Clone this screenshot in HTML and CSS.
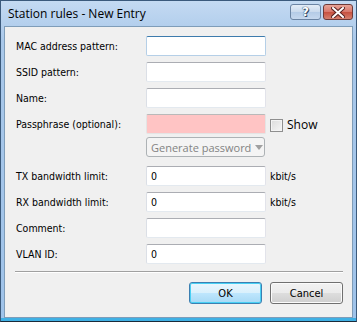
FILE: index.html
```
<!DOCTYPE html>
<html lang="en">
<head>
    <meta charset="UTF-8">
    <title>Station rules - New Entry</title>
    <link rel="stylesheet" href="styles.css">
</head>
<body>
    <div class="window">
        <!-- Title bar -->
        <div class="titlebar">
            <span class="title">Station rules - New Entry</span>
            <div class="caption-buttons">
                <div class="cap-btn help">?</div>
                <div class="cap-btn close">
                    <svg width="14" height="11" viewBox="0 0 14 11">
                        <path d="M2 1 L12 10 M12 1 L2 10" stroke="#5a2220" stroke-width="4" stroke-linecap="square"/>
                        <path d="M2 1 L12 10 M12 1 L2 10" stroke="#ffffff" stroke-width="2" stroke-linecap="square"/>
                    </svg>
                </div>
            </div>
        </div>

        <!-- Client area -->
        <div class="client">
            <div class="row">
                <label class="lbl">MAC address pattern:</label>
                <div class="field focused"></div>
            </div>
            <div class="row">
                <label class="lbl">SSID pattern:</label>
                <div class="field"></div>
            </div>
            <div class="row">
                <label class="lbl">Name:</label>
                <div class="field"></div>
            </div>
            <div class="row">
                <label class="lbl">Passphrase (optional):</label>
                <div class="field invalid"></div>
                <span class="check"></span>
                <span class="unit">Show</span>
            </div>
            <div class="row gen-row">
                <span class="lbl"></span>
                <div class="gen-btn">
                    <span class="gen-text">Generate password</span>
                    <span class="gen-sep"></span>
                    <span class="gen-arrow"></span>
                </div>
            </div>
            <div class="row tx-row">
                <label class="lbl">TX bandwidth limit:</label>
                <div class="field">0</div>
                <span class="unit">kbit/s</span>
            </div>
            <div class="row">
                <label class="lbl">RX bandwidth limit:</label>
                <div class="field">0</div>
                <span class="unit">kbit/s</span>
            </div>
            <div class="row">
                <label class="lbl">Comment:</label>
                <div class="field"></div>
            </div>
            <div class="row">
                <label class="lbl">VLAN ID:</label>
                <div class="field">0</div>
            </div>

            <div class="separator"></div>

            <div class="buttons">
                <div class="btn default">OK</div>
                <div class="btn">Cancel</div>
            </div>
        </div>
    </div>
</body>
</html>
```
FILE: styles.css
```
/* General styling */
body {
    margin: 0;
    background-color: #ffffff;
}

.window {
    width: 357px;
    height: 322px;
    box-sizing: border-box;
    display: flex;
    flex-direction: column;
    background: linear-gradient(#c4daf2, #a9c8ea 40px, #9fc3ea);
    border: 1px solid #3b5a7c;
    border-bottom: 1px solid #1b2b3a;
    padding: 0 3px 3px 3px;
    box-shadow: inset 0 -3px 0 #3fb0e4;
}

/* Title bar */
.titlebar {
    height: 25px;
    display: flex;
    align-items: flex-start;
    justify-content: space-between;
}

.title {
    font-family: "Open Sans", "Noto Sans", sans-serif;
    font-size: 12px;
    color: #000000;
    margin: 4px 0 0 4px;
}

.caption-buttons {
    display: flex;
    gap: 2px;
    margin-top: 3px;
}

.cap-btn {
    height: 16px;
    border-radius: 3px;
    display: flex;
    align-items: center;
    justify-content: center;
    box-sizing: border-box;
}

.cap-btn.help {
    width: 31px;
    border: 1px solid #6b84a3;
    background: linear-gradient(#e4edf7, #c9d9ec 50%, #b4cbe6 51%, #c6d8ee);
    font-family: "DejaVu Sans", sans-serif;
    font-weight: bold;
    font-size: 12px;
    color: #ffffff;
    text-shadow: 0 0 1px #334a66, 0 0 1px #334a66, 1px 1px 0 #334a66;
}

.cap-btn.close {
    width: 30px;
    border: 1px solid #6d3a38;
    background: linear-gradient(#e8a497, #d8766a 50%, #c7503f 51%, #d5806f);
}

/* Client area */
.client {
    flex: 1;
    background-color: #f0f0f0;
    border: 1px solid #7f9db9;
    padding: 9px 9px 0 10px;
    font-family: "DejaVu Sans Condensed", "DejaVu Sans", sans-serif;
    font-size: 10.5px;
    color: #000000;
}

.row {
    display: flex;
    align-items: center;
    height: 20px;
    margin-bottom: 6px;
    white-space: nowrap;
}

.lbl {
    width: 131px;
    padding-left: 1px;
    box-sizing: border-box;
}

.field {
    width: 120px;
    height: 20px;
    box-sizing: border-box;
    background-color: #ffffff;
    border: 1px solid #e2e3ea;
    border-top-color: #abadb3;
    border-left-color: #dbdfe6;
    border-bottom-color: #e3e9ef;
    border-radius: 2px;
    padding: 3px 0 0 4px;
}

.field.focused {
    border-color: #b5cfe7;
    border-top-color: #3d7bad;
}

.field.invalid {
    background-color: #ffc4c4;
    border-color: #e4e4e4;
    border-top-color: #b9b9b9;
}

.check {
    width: 13px;
    height: 13px;
    box-sizing: border-box;
    border: 1px solid #8f8f8f;
    background: linear-gradient(135deg, #dcdcdc, #f6f6f6);
    box-shadow: inset 0 0 0 1px #f4f4f4;
    margin: 2px 4px 0 4px;
}

.unit {
    margin-left: 4px;
}

.check + .unit {
    margin-left: 0;
    font-family: "Open Sans", "Noto Sans", sans-serif;
    font-size: 12px;
}

/* Generate password split button (disabled) */
.gen-row {
    margin-top: -3px;
    margin-bottom: 9px;
}

.gen-btn {
    width: 119px;
    height: 20px;
    box-sizing: border-box;
    border: 1px solid #adb2b5;
    border-radius: 3px;
    background-color: #f4f4f4;
    display: flex;
    align-items: center;
    color: #838383;
    font-family: "Open Sans", "Noto Sans", sans-serif;
    font-size: 11px;
}

.gen-text {
    flex: 1;
    padding-left: 4px;
}

.gen-sep {
    width: 1px;
    height: 14px;
    background-color: #adb2b5;
}

.gen-arrow {
    width: 0;
    height: 0;
    border-left: 4px solid transparent;
    border-right: 4px solid transparent;
    border-top: 5px solid #a0a0a0;
    margin: 0 4px;
}

.separator {
    margin-top: 7px;
    height: 1px;
    background-color: #a0a0a0;
    border-bottom: 1px solid #ffffff;
}

.buttons {
    display: flex;
    justify-content: flex-end;
    gap: 8px;
    margin-top: 9px;
}

.btn {
    width: 73px;
    height: 22px;
    box-sizing: border-box;
    border: 1px solid #707070;
    border-radius: 3px;
    background: linear-gradient(#f2f2f2, #ebebeb 50%, #dddddd 51%, #cfcfcf);
    box-shadow: inset 0 0 0 1px #fbfbfb;
    display: flex;
    align-items: center;
    justify-content: center;
    font-size: 11px;
}

.btn.default {
    border-color: #3c7fb1;
    background: linear-gradient(#eaf6fd, #d9f0fc 50%, #bee6fd 51%, #a7d9f5);
    box-shadow: inset 0 0 0 1px #48d0f4;
}
```
